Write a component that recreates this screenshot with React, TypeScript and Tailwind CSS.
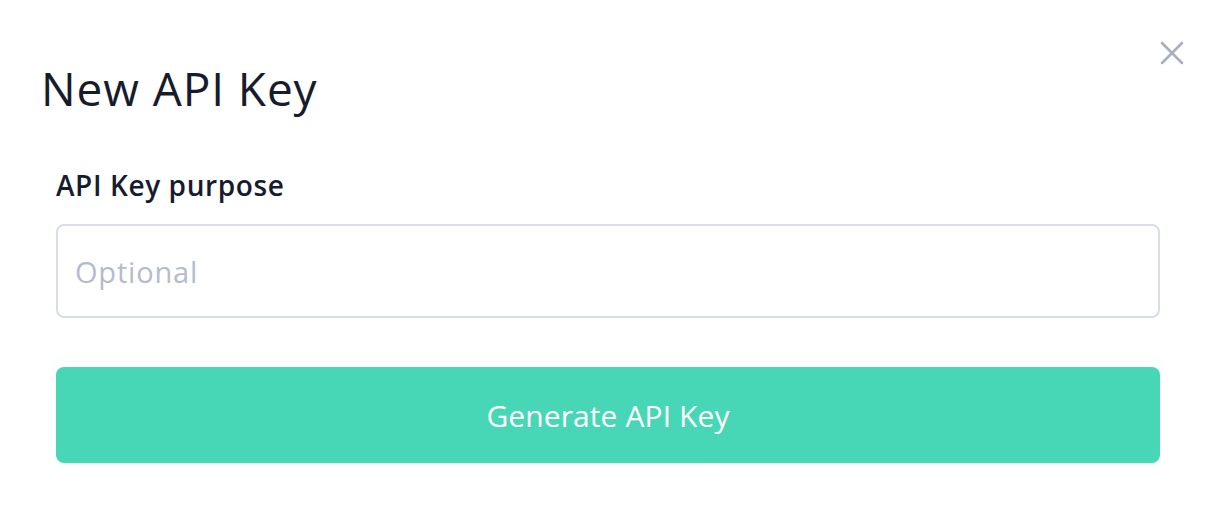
import React from "react";

export default function App() {
  return (
    <div className="relative w-[1217px] h-[524px] bg-white" style={{ fontFamily: "'Open Sans', Lato, sans-serif" }}>
      <button className="absolute left-[1158px] top-[39px] w-[28px] h-[28px] flex items-center justify-center" aria-label="Close">
        <svg width="26" height="26" viewBox="0 0 26 26" fill="none" stroke="#a9aec2" strokeWidth="2.6" strokeLinecap="round">
          <path d="M3 3L23 23M23 3L3 23" />
        </svg>
      </button>
      <div className="pt-[56px] pl-[41px]">
        <h1 className="text-[46px] leading-[64px] text-[#161c2e] font-normal tracking-[0.9px]">New API Key</h1>
      </div>
      <div className="pl-[56px] pr-[57px] pt-[47px] flex flex-col">
        <label className="text-[28px] leading-[36px] text-[#161c2e] font-semibold tracking-[0.6px]">API Key purpose</label>
        <input
          className="mt-[21px] h-[94px] w-full border-2 border-[#d9dcea] rounded-[8px] px-[17px] text-[29px] tracking-[0.8px] text-[#161c2e] placeholder:text-[#b6bacd] outline-none"
          placeholder="Optional"
        />
        <button className="mt-[49px] h-[96px] w-full rounded-[8px] bg-[#47d7b6] text-white text-[30px] tracking-[0.1px]">
          Generate API Key
        </button>
      </div>
    </div>
  );
}
